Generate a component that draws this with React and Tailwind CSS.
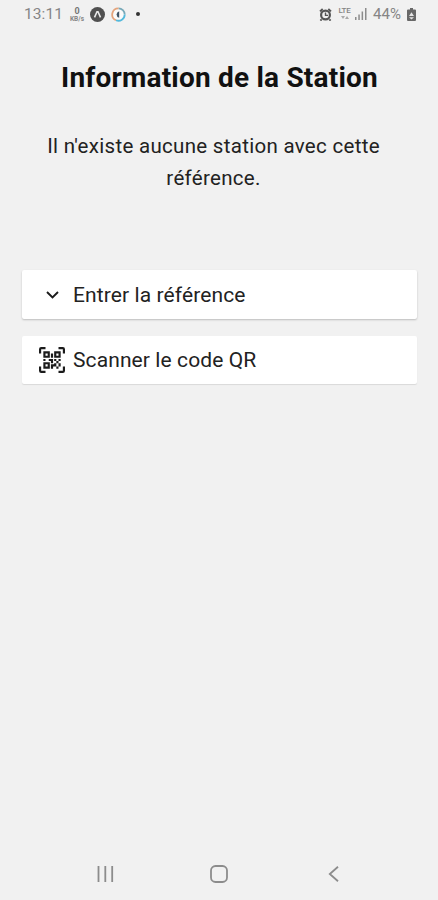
function StatusBar() {
  return (
    <header className="flex h-7 items-center justify-between pr-[22px] pl-[24px] text-[#858585]">
      <div className="flex items-center">
        <span className="w-[39px] pt-px text-[15.5px] leading-none tracking-[0.1px] whitespace-nowrap">13:11</span>
        <div className="ml-[6px] flex w-[16px] flex-col items-center">
          <span className="text-[9px] leading-[9px] font-bold text-[#777]">0</span>
          <span className="text-[6.5px] leading-[6px] font-bold">KB/s</span>
        </div>
        <svg className="ml-[5px] size-[15px]" viewBox="0 0 15 15">
          <circle cx="7.5" cy="7.5" r="7.5" fill="#505050" />
          <path d="M4.5 10.3 7 4.7h1l2.5 5.6" fill="none" stroke="#e8e8e8" strokeWidth="1.6" />
        </svg>
        <svg className="ml-[6px] size-[15px]" viewBox="0 0 15 15" fill="none">
          <circle cx="7.5" cy="7.5" r="5.8" fill="#fafafa" />
          <path d="M7.5 1.3A6.2 6.2 0 0 1 13.7 7.5" stroke="#78a9b8" strokeWidth="1.8" />
          <path d="M13.7 7.5A6.2 6.2 0 0 1 5 13.2" stroke="#53b9dc" strokeWidth="1.8" />
          <path d="M5 13.2A6.2 6.2 0 0 1 7.5 1.3" stroke="#e4a47c" strokeWidth="1.8" />
          <path d="M8.2 4.2a3.4 3.4 0 0 0 0 6.6z" fill="#3e5264" />
        </svg>
        <span className="ml-[10px] size-1 rounded-full bg-[#333]" />
      </div>
      <div className="flex items-center">
        <svg className="size-[13px]" viewBox="0 0 13 13" fill="none" stroke="#555">
          <circle cx="6.5" cy="7" r="4.4" strokeWidth="2.2" />
          <path d="M1 3.4 3.7 1M12 3.4 9.3 1M2.6 11.4l-1.2 1.2M10.4 11.4l1.2 1.2" strokeWidth="1.9" />
          <path d="M6.5 4.5V7.4H9" strokeWidth="1.4" />
        </svg>
        <div className="mb-[2px] ml-[6px] flex w-[13px] flex-col items-center">
          <span className="text-[8px] leading-[8px] font-medium tracking-[-0.2px]">LTE</span>
          <svg className="h-[5px] w-[8px]" viewBox="0 0 8 5" fill="#aaa">
            <path d="M0 1h4L2 4zM4 4h4L6 1z" />
          </svg>
        </div>
        <svg className="ml-[4px] h-[12px] w-[12px]" viewBox="0 0 12 12" fill="#8c8c8c">
          <path d="M0 9h1.5v3H0zM3.3 6.5h1.5V12H3.3zM6.6 3.5h1.5V12H6.6zM10 0h1.5v12H10z" />
        </svg>
        <span className="ml-[6px] w-[29px] text-[15px] leading-none tracking-[0.1px] whitespace-nowrap">44%</span>
        <svg className="ml-[5px] h-[13px] w-[9px]" viewBox="0 0 9 13">
          <path d="M3 0h3v1.5h2Q9 1.5 9 2.5V12q0 1-1 1H1q-1 0-1-1V2.5Q0 1.5 1 1.5h2z" fill="#686868" />
          <path d="M4.5 4.2 2 8h5zM2 9.3h5L4.5 11.5z" fill="#e5e5e5" />
        </svg>
      </div>
    </header>
  );
}

function QrScanIcon() {
  return (
    <svg className="size-[26px]" viewBox="0 0 24 24" fill="#1b1b1b">
      <path d="M4,4H10V10H4V4M20,4V10H14V4H20M14,15H16V13H14V11H16V13H18V11H20V13H18V15H20V18H18V20H16V18H13V20H11V16H14V15M16,15V18H18V15H16M4,20V14H10V20H4M6,6V8H8V6H6M16,6V8H18V6H16M6,16V18H8V16H6M4,11H6V13H4V11M9,11H13V15H11V13H9V11M11,6H13V10H11V6M2,2V6H0V2A2,2 0 0,1 2,0H6V2H2M22,0A2,2 0 0,1 24,2V6H22V2H18V0H22M2,18V22H6V24H2A2,2 0 0,1 0,22V18H2M22,22V18H24V22A2,2 0 0,1 22,24H18V22H22Z" />
    </svg>
  );
}

export default function App() {
  return (
    <div className="flex h-[900px] w-full flex-col overflow-hidden bg-[#f1f1f1] font-[Roboto,sans-serif]">
      <StatusBar />
      <main className="flex flex-1 flex-col pr-[21px] pl-[22px]">
        <h1 className="mt-[32px] text-center text-[28px] leading-9 font-bold tracking-[0.2px] whitespace-nowrap text-[#111]">
          Information de la Station
        </h1>
        <p className="mt-[34px] pr-[12px] text-center text-[20.5px] leading-8 tracking-[0.3px] text-[#222]">
          Il n'existe aucune station avec cette
          <br />
          référence.
        </p>
        <div className="mt-[76px] flex flex-col gap-[17px] text-[21px] tracking-[0.1px] text-[#222]">
          <button className="flex h-[49px] items-center rounded-[2px] bg-white pl-[17px] shadow-[0_1px_2px_rgba(0,0,0,0.22)]">
            <span className="flex w-[26px] justify-center">
              <svg className="h-[8px] w-[13px]" viewBox="0 0 13 8" fill="none" stroke="#1b1b1b" strokeWidth="1.9">
                <path d="m1 1 5.5 5.5L12 1" />
              </svg>
            </span>
            <span className="ml-2 pt-[3px] whitespace-nowrap">Entrer la référence</span>
          </button>
          <button className="flex h-[48px] items-center rounded-[2px] bg-white pl-[17px] shadow-[0_1px_1px_rgba(0,0,0,0.1)]">
            <QrScanIcon />
            <span className="ml-2 pt-[2px] whitespace-nowrap">Scanner le code QR</span>
          </button>
        </div>
      </main>
      <nav className="flex h-[53px] items-center pl-[97px]">
        <svg className="h-4 w-[17px]" viewBox="0 0 17 16" stroke="#8c8c8c" strokeWidth="1.8">
          <path d="M1.5 0v16M8.3 0v16M15.2 0v16" />
        </svg>
        <svg className="ml-[96px] size-[18px]" viewBox="0 0 18 18" fill="none" stroke="#8c8c8c" strokeWidth="1.8">
          <rect x="1" y="1" width="16" height="16" rx="4.5" />
        </svg>
        <svg className="ml-[100px] h-4 w-[11px]" viewBox="0 0 11 16" fill="none" stroke="#8c8c8c" strokeWidth="1.8">
          <path d="M10 .8 1.8 8l8.2 7.2" />
        </svg>
      </nav>
    </div>
  );
}
